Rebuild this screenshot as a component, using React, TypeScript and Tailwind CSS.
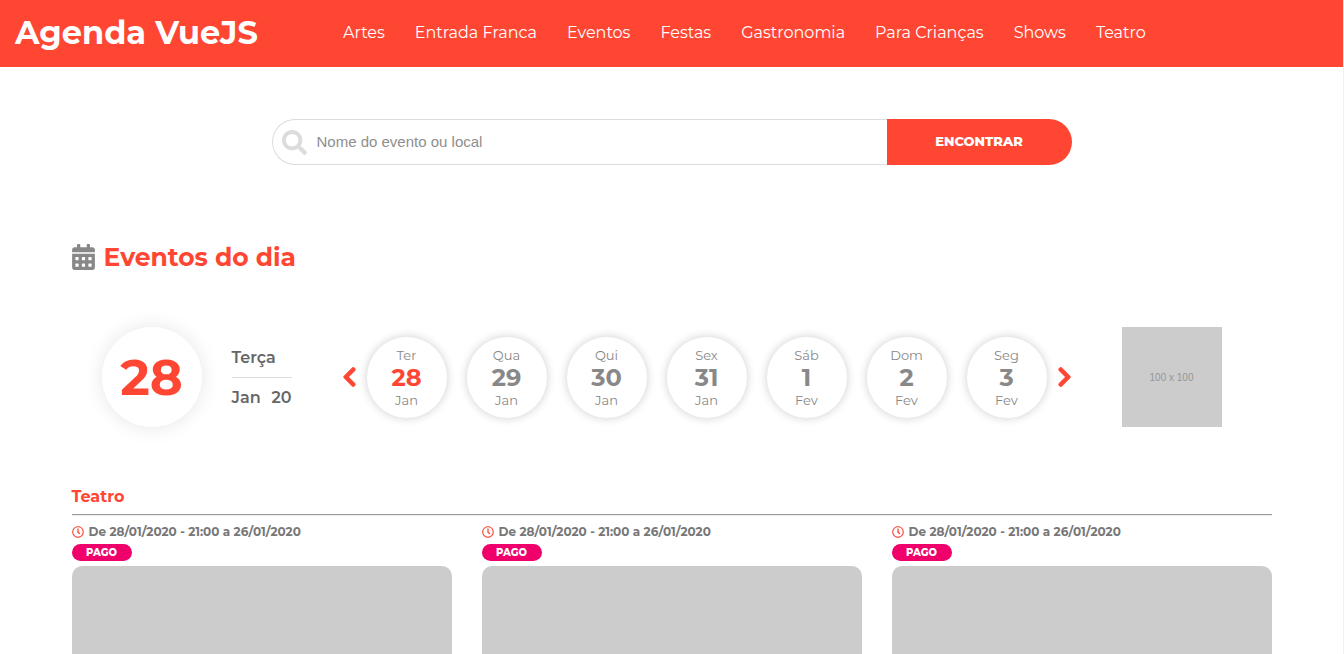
import React from "react";
import { FaCalendarAlt, FaChevronLeft, FaChevronRight, FaRegClock, FaSearch } from "react-icons/fa";

const categories = [
  "Artes",
  "Entrada Franca",
  "Eventos",
  "Festas",
  "Gastronomia",
  "Para Crianças",
  "Shows",
  "Teatro",
];

const days = [
  { week: "Ter", day: 28, month: "Jan", active: true },
  { week: "Qua", day: 29, month: "Jan", active: false },
  { week: "Qui", day: 30, month: "Jan", active: false },
  { week: "Sex", day: 31, month: "Jan", active: false },
  { week: "Sáb", day: 1, month: "Fev", active: false },
  { week: "Dom", day: 2, month: "Fev", active: false },
  { week: "Seg", day: 3, month: "Fev", active: false },
];

const events = [1, 2, 3];

function Header() {
  return (
    <header className="flex h-[67px] items-center bg-[#ff4633] pb-px text-white">
      <a href="#" className="w-[328px] shrink-0 pl-[15px] text-[32px] leading-10 font-bold">
        Agenda VueJS
      </a>
      <nav className="flex pl-[15px]">
        <ul className="flex gap-[30px] text-base leading-6 whitespace-nowrap">
          {categories.map((name) => (
            <li key={name}>
              <a href="#">{name}</a>
            </li>
          ))}
        </ul>
      </nav>
    </header>
  );
}

function Search() {
  return (
    <form className="mx-auto mt-[52px] flex h-[46px] w-full max-w-[800px]" onSubmit={(e) => e.preventDefault()}>
      <label className="flex flex-1 items-center gap-[10px] rounded-l-full border border-r-0 border-[#dcdcdc] pl-[9px]">
        <FaSearch className="size-[25px] text-[#dcdcdc]" />
        <input
          type="text"
          aria-label="Nome do evento ou local"
          placeholder="Nome do evento ou local"
          className="flex-1 bg-transparent font-['Liberation_Sans',sans-serif] text-[15px] text-[#666] outline-none placeholder:text-[#8e8e8e]"
        />
      </label>
      <button type="submit" className="w-[185px] rounded-r-full bg-[#ff4633] text-[13px] font-extrabold text-white">
        ENCONTRAR
      </button>
    </form>
  );
}

function DayPicker() {
  return (
    <div className="mt-[52px] flex items-center justify-between pr-[50px] pl-[30px]">
      <div className="flex items-center gap-[30px]">
        <div className="flex size-[100px] items-center justify-center rounded-full text-[50px] font-bold text-[#ff4633] shadow-[0_0_20px_rgba(0,0,0,0.1)]">
          28
        </div>
        <div className="w-[60px] text-base leading-[39px] font-semibold whitespace-nowrap text-[#666]">
          <div className="border-b border-[#dcdcdc]">Terça</div>
          <div className="flex justify-between">
            <span>Jan</span>
            <span>20</span>
          </div>
        </div>
      </div>
      <div className="flex items-center gap-[10px]">
        <button type="button" aria-label="Dias anteriores" className="text-[#ff4633]">
          <FaChevronLeft className="h-[22px] w-[15px] stroke-current stroke-[24]" />
        </button>
        <div className="flex gap-5">
          {days.map((d) => (
            <button
              key={d.day}
              type="button"
              className="flex h-[81px] w-20 flex-col items-center justify-center rounded-full text-[13px] leading-5 text-[#888] shadow-[0_0_10px_rgba(0,0,0,0.2)]"
            >
              <span>{d.week}</span>
              <span className={d.active ? "text-2xl leading-[25px] font-bold text-[#ff4633]" : "text-2xl leading-[25px] font-bold"}>
                {d.day}
              </span>
              <span>{d.month}</span>
            </button>
          ))}
        </div>
        <button type="button" aria-label="Próximos dias" className="text-[#ff4633]">
          <FaChevronRight className="h-[22px] w-[15px] stroke-current stroke-[24]" />
        </button>
      </div>
      <div className="flex size-[100px] items-center justify-center bg-[#ccc] font-['Liberation_Sans',sans-serif] text-[10px] text-[#969696]">
        100 x 100
      </div>
    </div>
  );
}

function EventCard() {
  return (
    <article className="flex flex-1 flex-col items-start">
      <p className="flex items-center gap-[5px] text-xs leading-5 font-bold text-[#777]">
        <FaRegClock className="size-3 text-[#ff4633]" />
        De 28/01/2020 - 21:00 a 26/01/2020
      </p>
      <span className="mt-[2px] flex h-[17px] w-[60px] items-center justify-center rounded-full bg-[#f0006b] text-[10px] font-extrabold text-white">
        PAGO
      </span>
      <div className="mt-[5px] min-h-20 w-full flex-1 rounded-t-[10px] bg-[#ccc]" />
    </article>
  );
}

export default function App() {
  return (
    <div className="flex min-h-screen flex-col border-r border-[#f1f1f1] bg-white font-['Montserrat','Inter',sans-serif]">
      <Header />
      <Search />
      <main className="mx-auto flex w-full max-w-[1200px] flex-1 flex-col">
        <h1 className="mt-[74px] flex items-center gap-[9px] text-[25px] leading-9 font-bold text-[#ff4633]">
          <FaCalendarAlt className="h-[26px] w-[23px] text-[#888]" />
          Eventos do dia
        </h1>
        <DayPicker />
        <section className="mt-[58px] flex flex-1 flex-col">
          <h2 className="border-b border-[#999] pb-[5px] text-base leading-6 font-bold text-[#ff4633] shadow-[0_1px_0_#eee]">
            Teatro
          </h2>
          <div className="mt-[7px] flex flex-1 gap-[30px]">
            {events.map((id) => (
              <EventCard key={id} />
            ))}
          </div>
        </section>
      </main>
    </div>
  );
}
